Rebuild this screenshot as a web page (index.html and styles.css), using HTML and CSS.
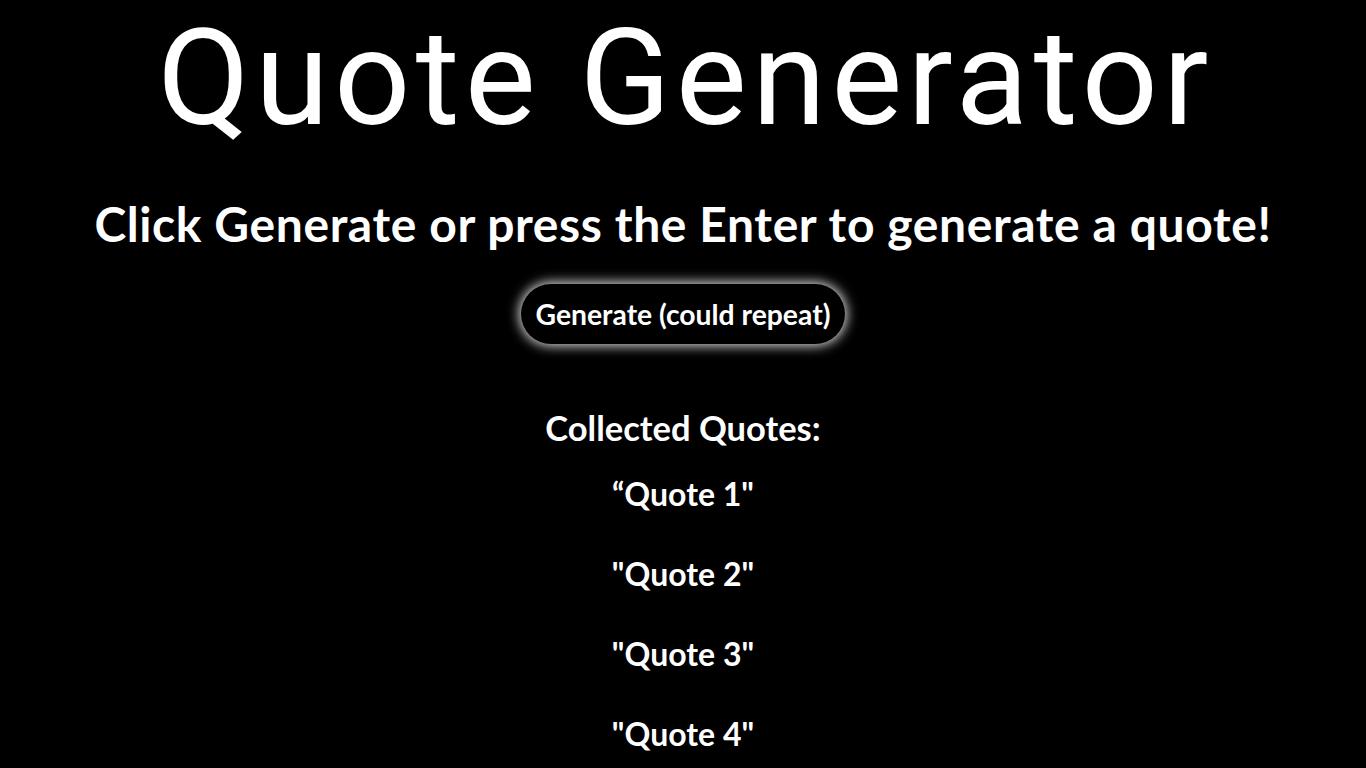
FILE: index.html
```html
<!DOCTYPE html>
<html>
<head>
<meta charset="utf-8">
<link rel="stylesheet" href="styles.css">
</head>
<body>
<main class="page">
  <h1 class="title">Quote Generator</h1>
  <h2 class="subtitle">Click Generate or press the Enter to generate a quote!</h2>
  <button class="generate">Generate (could repeat)</button>
  <section class="collected">
    <h3 class="collected-title">Collected Quotes:</h3>
    <p class="quote">“Quote 1"</p>
    <p class="quote">"Quote 2"</p>
    <p class="quote">"Quote 3"</p>
    <p class="quote">"Quote 4"</p>
  </section>
</main>
</body>
</html>
```

FILE: styles.css
```css
html, body {
  margin: 0;
  padding: 0;
  background: #000;
  color: #fff;
  font-family: "Lato", "Noto Sans", sans-serif;
}
.page {
  display: flex;
  flex-direction: column;
  align-items: center;
  text-align: center;
}
.title {
  margin: 0;
  font-family: "Roboto", "Lato", sans-serif;
  font-size: 134px;
  font-weight: 400;
  line-height: 157px;
  letter-spacing: 5.2px;
  text-indent: 5.2px;
}
.subtitle {
  margin: 37px 0 0;
  font-size: 48px;
  font-weight: 700;
  line-height: 60px;
  letter-spacing: 0.6px;
}
.generate {
  margin-top: 30px;
  height: 60px;
  padding: 0 15px;
  background: #000;
  color: #fff;
  border: none;
  border-radius: 30px;
  font-family: inherit;
  font-size: 28.3px;
  font-weight: 700;
  box-shadow: 0 0 12px 2px rgba(255,255,255,0.85);
}
.collected {
  margin-top: 64px;
  display: flex;
  flex-direction: column;
  align-items: center;
}
.collected-title {
  margin: 0;
  font-size: 34.5px;
  font-weight: 700;
  line-height: 40px;
}
.quote {
  margin: 26px 0 0;
  font-size: 32px;
  font-weight: 700;
  line-height: 40px;
}
.quote + .quote {
  margin-top: 40px;
}
```
